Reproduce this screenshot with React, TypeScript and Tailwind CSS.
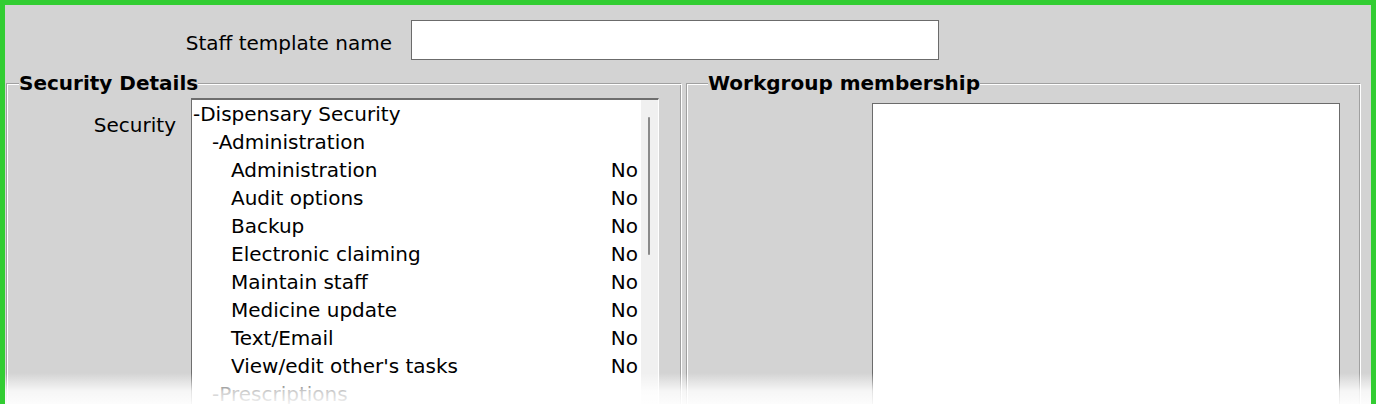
import React from "react";

type Item = { label: string; level: number; value?: string };

const items: Item[] = [
  { label: "-Dispensary Security", level: 0 },
  { label: "-Administration", level: 1 },
  { label: "Administration", level: 2, value: "No" },
  { label: "Audit options", level: 2, value: "No" },
  { label: "Backup", level: 2, value: "No" },
  { label: "Electronic claiming", level: 2, value: "No" },
  { label: "Maintain staff", level: 2, value: "No" },
  { label: "Medicine update", level: 2, value: "No" },
  { label: "Text/Email", level: 2, value: "No" },
  { label: "View/edit other's tasks", level: 2, value: "No" },
  { label: "-Prescriptions", level: 1 },
];

const indent = ["pl-[1px]", "pl-[20px]", "pl-[39px]"];

export default function App() {
  return (
    <div className="relative w-[1376px] h-[404px] overflow-hidden bg-[#d3d3d3] border-t-[5px] border-l-[5px] border-r-[5px] border-[#32cd32] font-['DejaVu_Sans',sans-serif] text-[20px] text-black">
      {/* top row */}
      <div className="flex items-center pt-[15px]">
        <div className="w-[387px] text-right leading-[24px] pt-[6px]">Staff template name</div>
        <div className="ml-[19px] w-[528px] h-[40px] bg-white border border-[#6b6b6b]" />
      </div>

      {/* fieldsets */}
      <div className="flex gap-[4px] ml-[1px] mt-[13px]">
        <fieldset className="w-[676px] h-[400px] border border-t-[#a0a0a0] border-l-[#a0a0a0] border-r-white border-b-white shadow-[inset_1px_1px_0_#ffffff,inset_-1px_-1px_0_#a0a0a0]">
          <legend className="ml-[12px] font-bold leading-[20px] bg-[#d3d3d3]">Security Details</legend>
          <div className="flex mt-[5px]">
            <div className="w-[169px] text-right leading-[28px] pt-[13px]">Security</div>
            <div className="ml-[15px] w-[468px] h-[320px] flex bg-white border-t-2 border-l border-r border-b border-t-[#6e6e6e] border-l-[#6e6e6e] border-r-white border-b-white overflow-hidden">
              <div className="flex-1 flex flex-col">
                {items.map((it, i) => (
                  <div
                    key={i}
                    className={`flex justify-between items-center h-[28px] shrink-0 pr-[3px] leading-[28px] whitespace-nowrap ${indent[it.level]}`}
                  >
                    <span>{it.label}</span>
                    {it.value && <span>{it.value}</span>}
                  </div>
                ))}
              </div>
              <div className="w-[17px] bg-[#f0f0f0] pt-[17px] pl-[7px]">
                <div className="w-[2px] h-[138px] bg-[#8a8a8a] rounded-full" />
              </div>
            </div>
          </div>
        </fieldset>

        <fieldset className="w-[675px] h-[400px] border border-t-[#a0a0a0] border-l-[#a0a0a0] border-r-white border-b-white shadow-[inset_1px_1px_0_#ffffff,inset_-1px_-1px_0_#a0a0a0]">
          <legend className="ml-[21px] font-bold leading-[20px] bg-[#d3d3d3]">Workgroup membership</legend>
          <div className="flex mt-[10px] pl-[185px]">
            <div className="w-[468px] h-[320px] bg-white border border-[#6b6b6b]" />
          </div>
        </fieldset>
      </div>

      {/* bottom fade */}
      <div className="absolute left-[-5px] right-[-5px] top-[368px] h-[36px] bg-gradient-to-b from-white/0 via-white/80 to-white" />
    </div>
  );
}
